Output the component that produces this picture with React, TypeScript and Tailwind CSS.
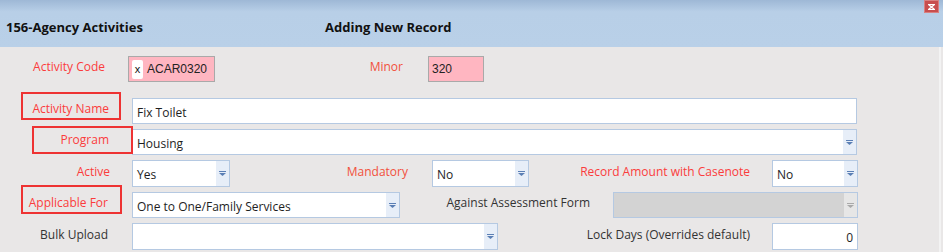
import React from "react";

const font = { fontFamily: '"Open Sans", "Noto Sans", Arial, sans-serif' };

function Arrow({ disabled = false }: { disabled?: boolean }) {
  return (
    <div
      className={`flex h-full w-[13px] items-center justify-center ${disabled ? "bg-[#e6e6e6]" : "bg-[#e7eef8]"}`}
    >
      <svg width="7" height="5" viewBox="0 0 7 5">
        <rect x="0" y="0" width="7" height="1" fill={disabled ? "#a9a9a9" : "#5b7fb5"} />
        <path d="M0 2 H7 L3.5 5 Z" fill={disabled ? "#a9a9a9" : "#5b7fb5"} />
      </svg>
    </div>
  );
}

function Select({ w, value, disabled = false }: { w: string; value?: string; disabled?: boolean }) {
  return (
    <div
      className={`${w} flex h-full items-stretch border border-[#b5c9e2] ${disabled ? "bg-[#d3d3d3]" : "bg-white"}`}
    >
      <div className="flex flex-1 items-center pl-[4px] pt-[3px] text-[12px] text-[#1e1e1e]">{value}</div>
      <Arrow disabled={disabled} />
    </div>
  );
}

function Label({
  w,
  pr,
  text,
  red = false,
  orange = false,
}: {
  w: string;
  pr: string;
  text: string;
  red?: boolean;
  orange?: boolean;
}) {
  const color = orange ? "text-[#f2503c]" : red ? "text-[#fb3c3c]" : "text-[#333333]";
  return (
    <div className={`${w} ${pr} flex h-full shrink-0 items-center justify-end pb-[4px] text-[12px] ${color}`}>
      {text}
    </div>
  );
}

function RedBox({ cls }: { cls: string }) {
  return <div className={`pointer-events-none absolute border-2 border-[#ee3333] ${cls}`} />;
}

export default function App() {
  return (
    <div className="h-[252px] w-[943px] overflow-hidden bg-[#e9e7e7]" style={font}>
      <div className="relative flex h-[47px] items-center bg-gradient-to-b from-[#9eb8d6] via-[#b8cfe7] via-25% to-[#b9d0e8] pt-[9px]">
        <div className="w-[325px] pl-[6px] text-[13px] font-bold text-[#111]">156-Agency Activities</div>
        <div className="text-[13px] font-bold text-[#111]">Adding New Record</div>
        <div className="absolute right-[4px] top-0 flex h-[13px] w-[15px] items-center justify-center border border-[#d98080] bg-[#c84e4e]">
          <svg width="7" height="6" viewBox="0 0 7 6">
            <rect x="0" y="0" width="7" height="1.2" fill="#fff" />
            <rect x="0" y="4.8" width="7" height="1.2" fill="#fff" />
            <path d="M1 1 L6 5 M6 1 L1 5" stroke="#fff" strokeWidth="1.2" />
          </svg>
        </div>
      </div>

      <div className="relative h-[205px] w-[941px] border-r-2 border-[#f3f3f3] pt-[9px]">
        {/* row 1 */}
        <div className="flex h-[26px] items-stretch">
          <Label w="w-[128px]" pr="pr-[23px]" text="Activity Code" red />
          <div className="flex w-[87px] items-center border border-[#a9a9a9] bg-[#ffb6c1] pl-[3px]">
            <span className="flex h-[19px] w-[11px] items-center justify-center rounded-[2px] bg-white text-[11px] text-[#111]" style={{ fontFamily: '"Liberation Sans", Arial, sans-serif' }}>
              x
            </span>
            <span className="pl-[4px] text-[12px] text-[#222]" style={{ fontFamily: '"Liberation Sans", Arial, sans-serif' }}>
              ACAR0320
            </span>
          </div>
          <Label w="w-[213px]" pr="pr-[25px]" text="Minor" orange />
          <div className="flex w-[56px] items-center border border-[#a9a9a9] bg-[#ffb6c1] pl-[3px] text-[12px] text-[#222]" style={{ fontFamily: '"Liberation Sans", Arial, sans-serif' }}>
            320
          </div>
        </div>

        {/* row 2 */}
        <div className="relative mt-[16px] flex h-[26px] items-stretch">
          <RedBox cls="left-[21px] top-[-6px] h-[28px] w-[100px]" />
          <Label w="w-[132px]" pr="pr-[23px]" text="Activity Name" red />
          <div className="flex w-[725px] items-center border border-[#b5c9e2] bg-white pl-[4px] pt-[3px] text-[12px] text-[#1e1e1e]">
            Fix Toilet
          </div>
        </div>

        {/* row 3 */}
        <div className="relative mt-[5px] flex h-[26px] items-stretch">
          <RedBox cls="left-[32px] top-[-3px] h-[28px] w-[101px]" />
          <Label w="w-[132px]" pr="pr-[23px]" text="Program" red />
          <Select w="w-[725px]" value="Housing" />
        </div>

        {/* row 4 */}
        <div className="mt-[5px] flex h-[27px] items-stretch">
          <Label w="w-[132px]" pr="pr-[22px]" text="Active" red />
          <Select w="w-[98px]" value="Yes" />
          <Label w="w-[202px]" pr="pr-[24px]" text="Mandatory" orange />
          <Select w="w-[97px]" value="No" />
          <Label w="w-[243px]" pr="pr-[22px]" text="Record Amount with Casenote" red />
          <Select w="w-[86px]" value="No" />
        </div>

        {/* row 5 */}
        <div className="relative mt-[5px] flex h-[26px] items-stretch">
          <RedBox cls="left-[21px] top-[-7px] h-[29px] w-[101px]" />
          <Label w="w-[132px]" pr="pr-[24px]" text="Applicable For" red />
          <Select w="w-[268px]" value="One to One/Family Services" />
          <Label w="w-[213px]" pr="pr-[23px]" text="Against Assessment Form" />
          <Select w="w-[245px]" disabled />
        </div>

        {/* row 6 */}
        <div className="mt-[5px] flex h-[27px] items-stretch">
          <Label w="w-[132px]" pr="pr-[24px]" text="Bulk Upload" />
          <Select w="w-[366px]" />
          <Label w="w-[274px]" pr="pr-[22px]" text="Lock Days (Overrides default)" />
          <div className="flex w-[86px] items-center justify-end border border-[#b5c9e2] bg-white pr-[4px] pt-[3px] text-[12px] text-[#1e1e1e]">
            0
          </div>
        </div>
      </div>
    </div>
  );
}
